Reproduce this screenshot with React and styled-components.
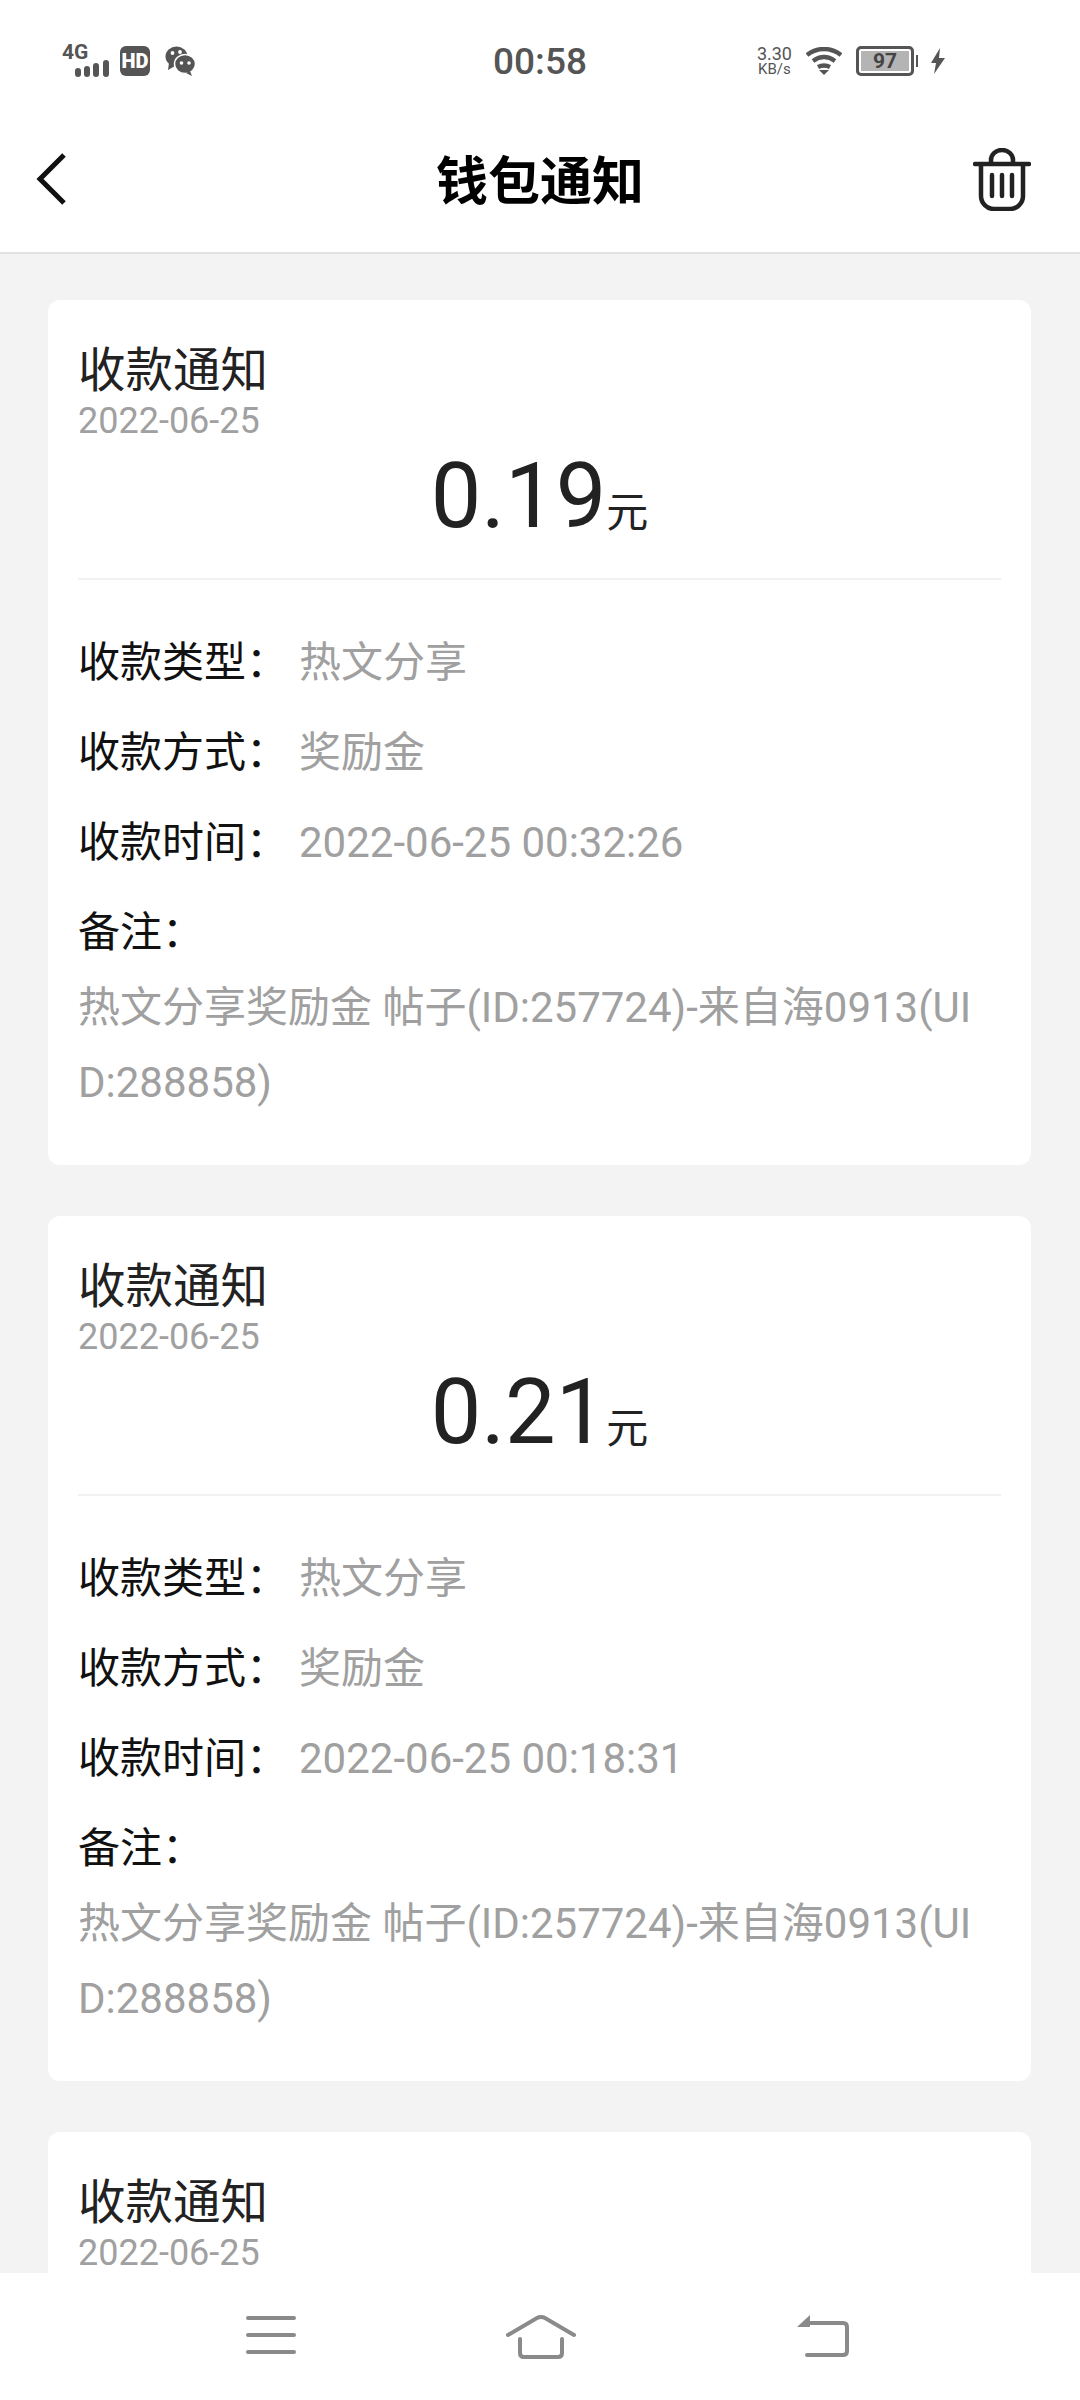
import styled, { createGlobalStyle } from "styled-components";

const GlobalStyle = createGlobalStyle`
  html, body { margin: 0; padding: 0; background: #f3f3f3; }
  body { font-family: Roboto, "Noto Sans CJK SC", sans-serif; }
`;

const Screen = styled.div`
  position: relative;
  width: 1080px;
  height: 2400px;
  overflow: hidden;
  display: flex;
  flex-direction: column;
  background: #f3f3f3;
`;

const TopArea = styled.header`
  background: #fff;
  border-bottom: 2px solid #e2e2e2;
  height: 252px;
  flex: none;
`;

const StatusBar = styled.div`
  height: 122px;
  display: grid;
  grid-template-columns: 1fr auto 1fr;
  align-items: center;
  padding: 0 62px;
  color: #555;
`;

const StatusLeft = styled.div`
  display: flex;
  align-items: center;
`;

const StatusRight = styled.div`
  display: flex;
  align-items: center;
  justify-content: flex-end;
  gap: 14px;
  padding-right: 73px;
`;

const Signal = styled.div`
  width: 49px;
  margin-right: 9px;
  display: flex;
  flex-direction: column;
`;

const NetLabel = styled.div`
  font-size: 21px;
  font-weight: 700;
  line-height: 15px;
  color: #555;
`;

const HdIcon = styled.svg`
  margin-right: 15px;
`;

const Clock = styled.div`
  font-size: 37px;
  font-weight: 500;
  color: #555;
`;

const Speed = styled.div`
  text-align: center;
  color: #555;
`;

const SpeedValue = styled.div`
  font-size: 18px;
  line-height: 16px;
`;

const SpeedUnit = styled.div`
  font-size: 15px;
  line-height: 15px;
`;

const Battery = styled.div`
  position: relative;
  width: 52px;
  height: 24px;
  margin-right: 3px;
  border: 3px solid #555;
  border-radius: 5px;
  background: #b4b4b4;
  box-shadow: inset 0 0 0 2px #fff;
  font-size: 21px;
  font-weight: 700;
  line-height: 24px;
  text-align: center;
  color: #444;

  &::after {
    content: "";
    position: absolute;
    right: -7px;
    top: 6px;
    width: 2px;
    height: 12px;
    background: #555;
  }
`;

const NavBar = styled.div`
  height: 130px;
  box-sizing: border-box;
  padding: 0 49px 16px 36px;
  display: flex;
  align-items: center;
  justify-content: space-between;
  position: relative;
`;

const PageTitle = styled.h1`
  position: absolute;
  left: 0;
  right: 0;
  margin: 0;
  padding-bottom: 3px;
  text-align: center;
  font-size: 52px;
  font-weight: 700;
  color: #000;
`;

const List = styled.main`
  flex: 1;
  padding: 46px 49px 0 48px;
  display: flex;
  flex-direction: column;
  gap: 51px;
`;

const Card = styled.section`
  flex: none;
  height: 865px;
  box-sizing: border-box;
  padding: 41px 30px 0 30px;
  background: #fff;
  border-radius: 12px;
`;

const CardTitle = styled.div`
  font-size: 47.5px;
  line-height: 60px;
  color: #222;
`;

const CardDate = styled.div`
  font-size: 36px;
  line-height: 40px;
  color: #a0a0a0;
`;

const Amount = styled.div`
  display: flex;
  justify-content: center;
  align-items: baseline;
  height: 112px;
  padding-bottom: 25px;
  border-bottom: 2px solid #f1f1f1;
  color: #222;
`;

const AmountValue = styled.span`
  font-size: 90px;
  line-height: 112px;
`;

const AmountUnit = styled.span`
  font-size: 42px;
`;

const Rows = styled.div`
  padding-top: 37.5px;
`;

const Row = styled.div`
  display: flex;
  height: 90.3px;
  align-items: baseline;
  font-size: 42px;
  line-height: 90px;
  color: #111;
`;

const RowLabel = styled.span`
  width: 221px;
  flex: none;
`;

const RowValue = styled.span`
  color: #a0a0a0;
`;

const Note = styled.div`
  margin-top: -9px;
  padding-right: 2px;
  font-size: 42px;
  line-height: 75px;
  color: #a0a0a0;
  word-break: break-all;
`;

const BottomNav = styled.footer`
  position: absolute;
  left: 0;
  right: 0;
  bottom: 0;
  height: 127px;
  box-sizing: border-box;
  padding: 42px 0 0 246px;
  background: #fff;
  display: flex;
  align-items: flex-start;
`;

const NavSlot = styled.div`
  display: flex;
  margin-left: ${(p) => p.$ml || 0}px;
`;

const records = [
  { amount: "0.19", time: "2022-06-25 00:32:26" },
  { amount: "0.21", time: "2022-06-25 00:18:31" },
];

const StatusIcons = () => (
  <StatusLeft>
    <Signal>
      <NetLabel>4G</NetLabel>
      <svg width="49" height="17" viewBox="0 0 49 17">
        <g fill="#555">
          <rect x="13" y="8" width="6" height="9" rx="3" />
          <rect x="22" y="6" width="6" height="11" rx="3" />
          <rect x="31" y="3" width="6" height="14" rx="3" />
          <rect x="41" y="0" width="6" height="17" rx="3" />
        </g>
      </svg>
    </Signal>
    <HdIcon width="30" height="30" viewBox="0 0 30 30">
      <rect width="30" height="30" rx="6" fill="#555" />
      <text x="15" y="22" textAnchor="middle" fontSize="20" fontWeight="900" fill="#fff" fontFamily="Roboto">HD</text>
    </HdIcon>
    <svg width="31" height="30" viewBox="0 0 31 30">
      <ellipse cx="11.5" cy="10.5" rx="11" ry="10" fill="#555" />
      <path d="M4 17l-1 7 7-4z" fill="#555" />
      <ellipse cx="20" cy="18" rx="10.5" ry="9.5" fill="#555" stroke="#fff" strokeWidth="1.5" />
      <path d="M25 25l2 5-6-3z" fill="#555" />
      <circle cx="7.5" cy="7" r="1.9" fill="#fff" />
      <circle cx="15" cy="6" r="1.9" fill="#fff" />
      <circle cx="16.5" cy="17" r="1.8" fill="#fff" />
      <circle cx="24" cy="17" r="1.8" fill="#fff" />
    </svg>
  </StatusLeft>
);

const Wifi = () => (
  <svg width="36" height="28" viewBox="0 0 36 28" fill="none" stroke="#555" strokeWidth="4.5">
    <path d="M1 8c10-8 24-8 34 0" />
    <path d="M7 14c7-5 15-5 22 0" />
    <path d="M12 20c4-2 8-2 12 0" />
    <path d="M13 23h10l-5 5z" fill="#555" stroke="none" />
  </svg>
);

const Trash = () => (
  <svg width="58" height="63" viewBox="0 0 58 63" fill="none" stroke="#222" strokeWidth="4.5" strokeLinecap="round">
    <path d="M2 16h54" />
    <path d="M18 15V12a11 10 0 0 1 22 0v3" />
    <path d="M8 17v31a13 13 0 0 0 13 13h16a13 13 0 0 0 13-13V17" />
    <path d="M19 27v21M29 27v21M39 27v21" strokeWidth="4.5" />
  </svg>
);

const CardHead = () => (
  <>
    <CardTitle>收款通知</CardTitle>
    <CardDate>2022-06-25</CardDate>
  </>
);

export default function App() {
  return (
    <Screen>
      <GlobalStyle />
      <TopArea>
        <StatusBar>
          <StatusIcons />
          <Clock>00:58</Clock>
          <StatusRight>
            <Speed>
              <SpeedValue>3.30</SpeedValue>
              <SpeedUnit>KB/s</SpeedUnit>
            </Speed>
            <Wifi />
            <Battery>97</Battery>
            <svg width="14" height="26" viewBox="0 0 14 26">
              <path d="M9 0L0 15h5L3 26l11-16H8z" fill="#555" />
            </svg>
          </StatusRight>
        </StatusBar>
        <NavBar>
          <svg width="30" height="52" viewBox="0 0 30 52" fill="none" stroke="#111" strokeWidth="5">
            <path d="M28 2L4 26l24 24" />
          </svg>
          <PageTitle>钱包通知</PageTitle>
          <Trash />
        </NavBar>
      </TopArea>
      <List>
        {records.map((r) => (
          <Card key={r.time}>
            <CardHead />
            <Amount>
              <AmountValue>{r.amount}</AmountValue>
              <AmountUnit>元</AmountUnit>
            </Amount>
            <Rows>
              <Row><RowLabel>收款类型：</RowLabel><RowValue>热文分享</RowValue></Row>
              <Row><RowLabel>收款方式：</RowLabel><RowValue>奖励金</RowValue></Row>
              <Row><RowLabel>收款时间：</RowLabel><RowValue>{r.time}</RowValue></Row>
              <Row>备注：</Row>
              <Note>热文分享奖励金 帖子(ID:257724)-来自海0913(UID:288858)</Note>
            </Rows>
          </Card>
        ))}
        <Card>
          <CardHead />
        </Card>
      </List>
      <BottomNav>
        <NavSlot>
          <svg width="50" height="40" viewBox="0 0 50 40" stroke="#8a8a8a" strokeWidth="4" strokeLinecap="round">
            <path d="M2 3h46M2 20h46M2 37h46" />
          </svg>
        </NavSlot>
        <NavSlot $ml={210}>
          <svg width="70" height="44" viewBox="0 0 70 44" fill="none" stroke="#8a8a8a" strokeWidth="4" strokeLinecap="round">
            <path d="M2 20L31 3q4-2 8 0l29 17" />
            <path d="M14 24v14q0 4 4 4h34q4 0 4-4V24" />
          </svg>
        </NavSlot>
        <NavSlot $ml={221}>
          <svg width="52" height="42" viewBox="0 0 52 42" fill="none">
            <path d="M13 8h33q4 0 4 4v24q0 4-4 4H10" stroke="#8a8a8a" strokeWidth="4" strokeLinecap="round" />
            <path d="M13 0v12H0z" fill="#8a8a8a" />
          </svg>
        </NavSlot>
      </BottomNav>
    </Screen>
  );
}
